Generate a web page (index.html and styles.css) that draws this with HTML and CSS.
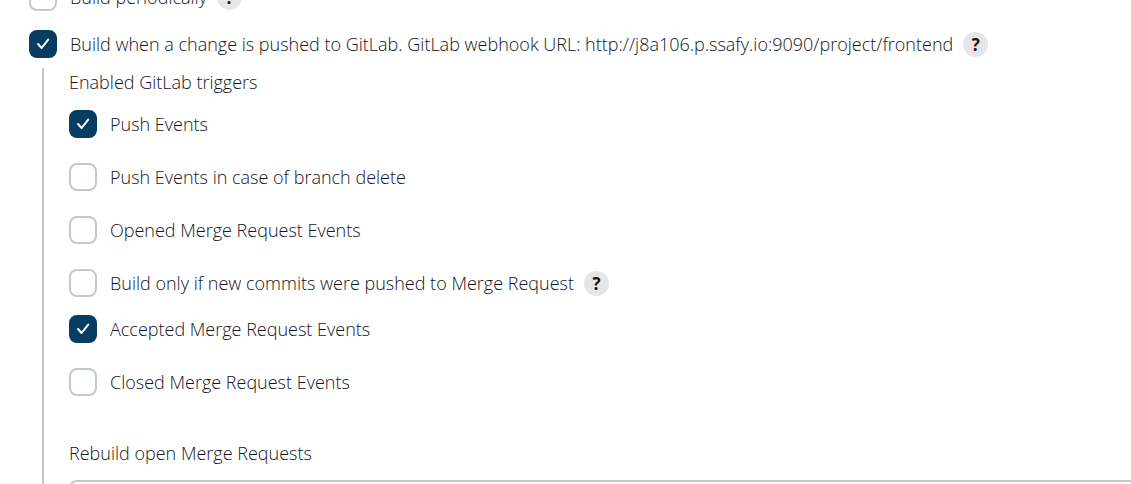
FILE: index.html
```html
<!DOCTYPE html>
<html lang="en">
<head>
<meta charset="utf-8">
<title>Build Triggers</title>
<link rel="stylesheet" href="styles.css">
</head>
<body>
<form class="triggers">
  <div class="option">
    <span class="box"><input type="checkbox" id="periodic"><svg class="tick" viewBox="0 0 28 28" aria-hidden="true"><path d="M9 14l3.6 4 6.6-8.4"/></svg></span>
    <label for="periodic">Build periodically</label>
    <button type="button" class="help" aria-label="Help for Build periodically">?</button>
  </div>
  <div class="option option-main">
    <span class="box"><input type="checkbox" id="gitlab" checked><svg class="tick" viewBox="0 0 28 28" aria-hidden="true"><path d="M9 14l3.6 4 6.6-8.4"/></svg></span>
    <label for="gitlab">Build when a change is pushed to GitLab. GitLab webhook URL: http://j8a106.p.ssafy.io:9090/project/frontend</label>
    <button type="button" class="help" aria-label="Help for GitLab trigger">?</button>
  </div>
  <section class="nested">
    <h2 class="heading">Enabled GitLab triggers</h2>
    <div class="events">
      <div class="option">
        <span class="box"><input type="checkbox" id="push" checked><svg class="tick" viewBox="0 0 28 28" aria-hidden="true"><path d="M9 14l3.6 4 6.6-8.4"/></svg></span>
        <label for="push">Push Events</label>
      </div>
      <div class="option">
        <span class="box"><input type="checkbox" id="branch-delete"><svg class="tick" viewBox="0 0 28 28" aria-hidden="true"><path d="M9 14l3.6 4 6.6-8.4"/></svg></span>
        <label for="branch-delete">Push Events in case of branch delete</label>
      </div>
      <div class="option">
        <span class="box"><input type="checkbox" id="opened"><svg class="tick" viewBox="0 0 28 28" aria-hidden="true"><path d="M9 14l3.6 4 6.6-8.4"/></svg></span>
        <label for="opened">Opened Merge Request Events</label>
      </div>
      <div class="option option-helped">
        <span class="box"><input type="checkbox" id="new-commits"><svg class="tick" viewBox="0 0 28 28" aria-hidden="true"><path d="M9 14l3.6 4 6.6-8.4"/></svg></span>
        <label for="new-commits">Build only if new commits were pushed to Merge Request</label>
        <button type="button" class="help" aria-label="Help for new commits">?</button>
      </div>
      <div class="option">
        <span class="box"><input type="checkbox" id="accepted" checked><svg class="tick" viewBox="0 0 28 28" aria-hidden="true"><path d="M9 14l3.6 4 6.6-8.4"/></svg></span>
        <label for="accepted">Accepted Merge Request Events</label>
      </div>
      <div class="option">
        <span class="box"><input type="checkbox" id="closed"><svg class="tick" viewBox="0 0 28 28" aria-hidden="true"><path d="M9 14l3.6 4 6.6-8.4"/></svg></span>
        <label for="closed">Closed Merge Request Events</label>
      </div>
    </div>
    <label class="heading" for="rebuild">Rebuild open Merge Requests</label>
    <select class="select" id="rebuild"></select>
  </section>
</form>
</body>
</html>
```
FILE: styles.css
```css
* {
  box-sizing: border-box;
}

body {
  height: 100vh;
  margin: 0;
  overflow: hidden;
  background: #fff;
  color: #14141f;
  font: 300 18px/28px "Open Sans", "Noto Sans", sans-serif;
}

.triggers {
  margin-top: -17px;
  padding-left: 29px;
}

.option {
  display: flex;
  align-items: center;
  white-space: nowrap;
}

.option-main {
  margin-top: 19px;
}

.box {
  display: grid;
  flex: none;
  width: 28px;
  height: 28px;
  margin-right: 13px;
}

.box input {
  grid-area: 1 / 1;
  width: 28px;
  height: 28px;
  margin: 0;
  appearance: none;
  background: #fff;
  border: 2px solid #c0cacd;
  border-radius: 8px;
}

.box input:checked {
  background: #063d60;
  border-color: #063d60;
}

.tick {
  grid-area: 1 / 1;
  visibility: hidden;
  fill: none;
  stroke: #fff;
  stroke-width: 2;
  stroke-linecap: round;
  stroke-linejoin: round;
  pointer-events: none;
}

.box input:checked + .tick {
  visibility: visible;
}

.help {
  flex: none;
  width: 25px;
  height: 25px;
  margin-left: 10px;
  padding: 0;
  border: 0;
  border-radius: 50%;
  background: #e6e6e6;
  color: #14141f;
  font: 700 17px/25px "Open Sans", "Noto Sans", sans-serif;
}

.nested {
  margin: 10px 0 0 13px;
  padding-left: 25px;
  border-left: 2px solid #c0cacd;
}

.heading {
  display: block;
  margin: 0;
  font-size: 18px;
  font-weight: 300;
}

.events {
  display: flex;
  flex-direction: column;
  gap: 25px;
  margin: 14px 0 43px;
}

.option-helped {
  margin-bottom: -7px;
}

.select {
  display: block;
  width: 100%;
  height: 42px;
  margin-top: 13px;
  appearance: none;
  background: #fff;
  border: 2px solid #c0cacd;
  border-right: 0;
  border-radius: 8px 0 0 8px;
}
```
